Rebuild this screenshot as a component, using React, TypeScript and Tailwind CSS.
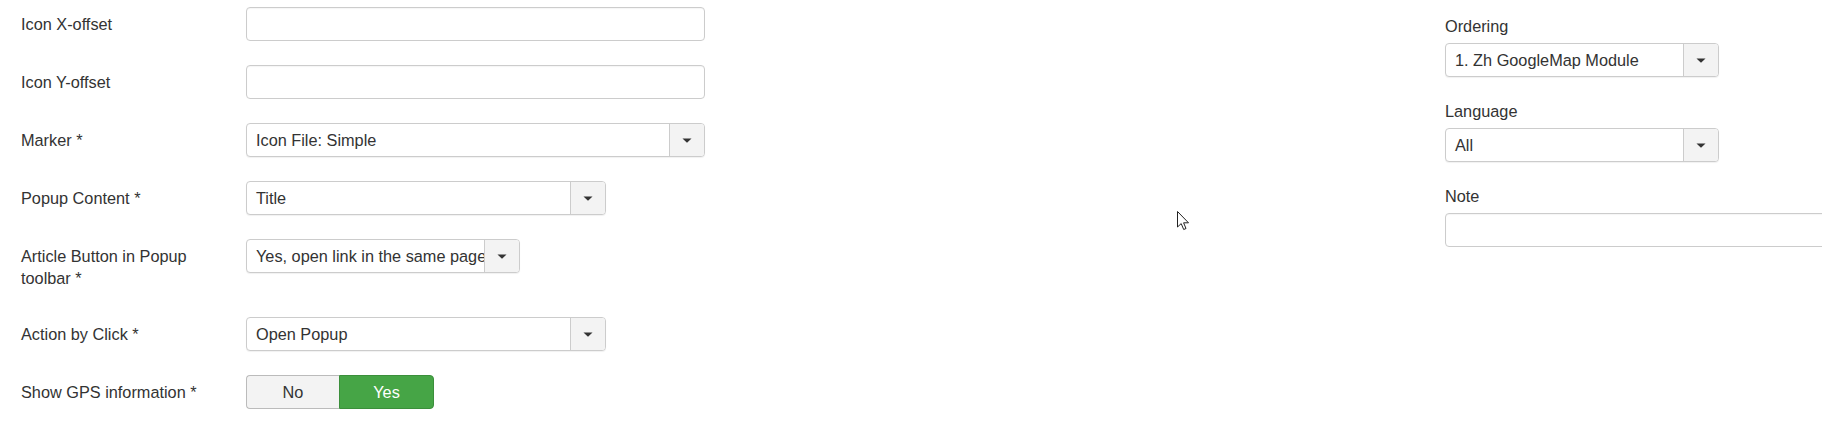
import React from 'react';

const font = "font-['Liberation_Sans',Arial,sans-serif]";

function TextInput({ width }: { width: string }) {
  return (
    <div
      className={`${width} h-[34px] rounded-[4px] border border-[#cccccc] bg-white shadow-[inset_0_1px_1px_rgba(0,0,0,0.04)]`}
    />
  );
}

function Select({ width, value }: { width: string; value: string }) {
  return (
    <div
      className={`${width} h-[34px] flex rounded-[4px] border border-[#cccccc] bg-white overflow-hidden shadow-[0_1px_1px_rgba(0,0,0,0.06)]`}
    >
      <div className="flex-1 min-w-0 pl-[9px] flex items-center whitespace-nowrap overflow-hidden text-[16.3px] text-[#333333]">
        {value}
      </div>
      <div className="w-[35px] shrink-0 flex items-center justify-center border-l border-[#cccccc] bg-[#f3f3f3]">
        <svg width="10" height="5" viewBox="0 0 10 5">
          <path d="M0.5 0.5 L9.5 0.5 L5 4.8 Z" fill="#333333" />
        </svg>
      </div>
    </div>
  );
}

function Row({ label, children, mb = 'mb-[24px]' }: { label: React.ReactNode; children: React.ReactNode; mb?: string }) {
  return (
    <div className={`flex items-start ${mb}`}>
      <div className="ml-[21px] w-[225px] pt-[6px] leading-[22px] text-[16.3px] text-[#333333]">{label}</div>
      {children}
    </div>
  );
}

function SideField({ label, children }: { label: string; children: React.ReactNode }) {
  return (
    <div className="mb-[23px]">
      <div className="leading-[22px] text-[16.3px] text-[#333333] mb-[6px]">{label}</div>
      {children}
    </div>
  );
}

export default function App() {
  return (
    <div className={`relative w-full h-[425px] bg-white overflow-hidden ${font}`}>
      <div className="flex">
        {/* Main form column */}
        <div className="w-[1445px] shrink-0 pt-[7px]">
          <Row label="Icon X-offset">
            <TextInput width="w-[459px]" />
          </Row>
          <Row label="Icon Y-offset">
            <TextInput width="w-[459px]" />
          </Row>
          <Row label="Marker *">
            <Select width="w-[459px]" value="Icon File: Simple" />
          </Row>
          <Row label="Popup Content *">
            <Select width="w-[360px]" value="Title" />
          </Row>
          <Row label={<>Article Button in Popup<br />toolbar *</>} mb="mb-[28px]">
            <Select width="w-[274px]" value="Yes, open link in the same page" />
          </Row>
          <Row label="Action by Click *">
            <Select width="w-[360px]" value="Open Popup" />
          </Row>
          <Row label="Show GPS information *">
            <div className="flex h-[34px] text-[16.3px]">
              <div className="w-[93px] flex items-center justify-center rounded-l-[4px] border border-r-0 border-[#bbbbbb] bg-[#f3f3f3] text-[#333333]">
                No
              </div>
              <div className="w-[95px] flex items-center justify-center rounded-r-[4px] border border-[#3b8f3b] bg-[#46a546] text-white">
                Yes
              </div>
            </div>
          </Row>
        </div>

        {/* Side column */}
        <div className="flex-1 pt-[15px]">
          <SideField label="Ordering">
            <Select width="w-[274px]" value="1. Zh GoogleMap Module" />
          </SideField>
          <SideField label="Language">
            <Select width="w-[274px]" value="All" />
          </SideField>
          <SideField label="Note">
            <TextInput width="w-[461px]" />
          </SideField>
        </div>
      </div>

      {/* mouse cursor */}
      <svg className="absolute left-[1177px] top-[211px]" width="13" height="20" viewBox="0 0 13 20">
        <path
          d="M0.5 0.5 L0.5 16 L4.2 12.6 L6.7 18.5 L9 17.5 L6.6 11.8 L11.5 11.8 Z"
          fill="white"
          stroke="#222222"
          strokeWidth="1"
          strokeLinejoin="round"
        />
      </svg>
    </div>
  );
}
